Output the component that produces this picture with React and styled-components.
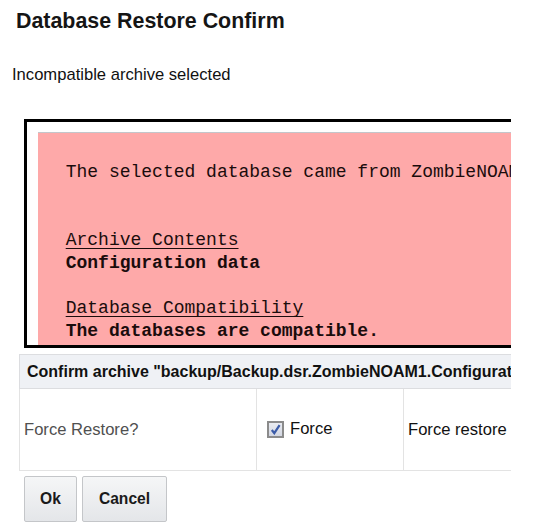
import React from 'react'
import styled, { createGlobalStyle } from 'styled-components'

const Global = createGlobalStyle`
    html, body {
        margin: 0;
        padding: 0;
        background: #fff;
    }
    body {
        font-family: 'Liberation Sans', Arial, sans-serif;
        color: #000;
    }
`

const Page = styled.div`
    width: 535px;
    height: 526px;
    overflow: hidden;
    padding-top: 9px;
    box-sizing: border-box;
`

const Title = styled.h2`
    margin: 0 0 0 16px;
    font-size: 21.4px;
    line-height: 24px;
    font-weight: bold;
    color: #151515;
`

const Notice = styled.p`
    margin: 32px 0 0 12px;
    font-size: 16.6px;
    line-height: 20px;
    color: #111;
`

const Content = styled.div`
    margin: 34px 0 0 19px;
    width: 492px;
    overflow: hidden;
`

const Frame = styled.div`
    margin-left: 5px;
    width: 900px;
    height: 229px;
    padding: 10px 0 0 11px;
    box-sizing: border-box;
    border: 3px solid #000;
    border-right: none;
    overflow: hidden;
`

const Report = styled.pre`
    margin: 0;
    min-height: 240px;
    padding: 27.5px 0 0 27.7px;
    background: #fea9a9;
    border-top: 1px solid #c3c6cb;
    font-family: 'Liberation Mono', 'Courier New', monospace;
    font-size: 18px;
    line-height: 22.8px;
    color: #1a0c0c;
`

const Heading = styled.span`
    text-decoration: underline;
    text-underline-offset: 3px;
`

const Strong = styled.b`
    font-weight: bold;
`

const Table = styled.table`
    margin-top: 6px;
    width: 720px;
    table-layout: fixed;
    border-collapse: collapse;
`

const Col = styled.col`
    width: ${p => p.$w ? `${p.$w}px` : 'auto'};
`

const HeadCell = styled.th`
    height: 33px;
    padding: 0 0 0 7px;
    text-align: left;
    font-size: 16px;
    font-weight: bold;
    color: #111;
    background: #eff1f5;
    border: 1px solid #dcdde0;
    white-space: nowrap;
    overflow: hidden;
`

const Cell = styled.td`
    height: 81px;
    padding: 0 0 0 ${p => p.$pad || 4}px;
    border: 1px solid #e3e3e3;
    border-top: none;
    font-size: 16.6px;
    color: ${p => p.$muted ? '#505050' : '#111'};
    white-space: nowrap;
    vertical-align: middle;
`

const Check = styled.label`
    display: inline-flex;
    align-items: center;
    gap: 6px;
    margin-top: -6px;
`

const Box = styled.span`
    width: 17px;
    height: 17px;
    box-sizing: border-box;
    border: 2px solid #8b8b8b;
    background: linear-gradient(#e9ebf1, #d3d7e2);
    display: inline-flex;
    align-items: center;
    justify-content: center;
`

const Buttons = styled.div`
    display: flex;
    gap: 5px;
    margin: 5px 0 0 24px;
`

const Button = styled.button`
    width: ${p => p.$w}px;
    height: 46px;
    padding: 0;
    border: 1px solid #c4c6c9;
    border-radius: 2px;
    background: linear-gradient(#f5f6f7, #e4e6e9);
    font-family: 'Liberation Sans', Arial, sans-serif;
    font-size: 15.6px;
    font-weight: bold;
    color: #1a1a1a;
`

export default function App() {
    return (
        <Page>
            <Global />
            <Title>Database Restore Confirm</Title>
            <Notice>Incompatible archive selected</Notice>
            <Content>
                <Frame>
                    <Report>
                        {'The selected database came from ZombieNOAM1 on the selected server.\n\n\n'}
                        <Heading>Archive Contents</Heading>
                        {'\n'}
                        <Strong>Configuration data</Strong>
                        {'\n\n'}
                        <Heading>Database Compatibility</Heading>
                        {'\n'}
                        <Strong>The databases are compatible.</Strong>
                        {'\n'}
                    </Report>
                </Frame>
                <Table>
                    <colgroup>
                        <Col $w={237} />
                        <Col $w={147} />
                        <Col />
                    </colgroup>
                    <thead>
                        <tr>
                            <HeadCell colSpan={3}>
                                Confirm archive "backup/Backup.dsr.ZombieNOAM1.Configuration.NETWORK_OAMP.tar.bz2"
                            </HeadCell>
                        </tr>
                    </thead>
                    <tbody>
                        <tr>
                            <Cell $muted>Force Restore?</Cell>
                            <Cell $pad={10}>
                                <Check>
                                    <Box>
                                        <svg width="11" height="11" viewBox="0 0 11 11">
                                            <path d="M1.8 6 L4.3 9.2 L9.6 1.2" fill="none" stroke="#3b5ba8" strokeWidth="2.2" />
                                        </svg>
                                    </Box>
                                    Force
                                </Check>
                            </Cell>
                            <Cell>Force restore on the selected server</Cell>
                        </tr>
                    </tbody>
                </Table>
            </Content>
            <Buttons>
                <Button $w={53}>Ok</Button>
                <Button $w={85}>Cancel</Button>
            </Buttons>
        </Page>
    )
}
